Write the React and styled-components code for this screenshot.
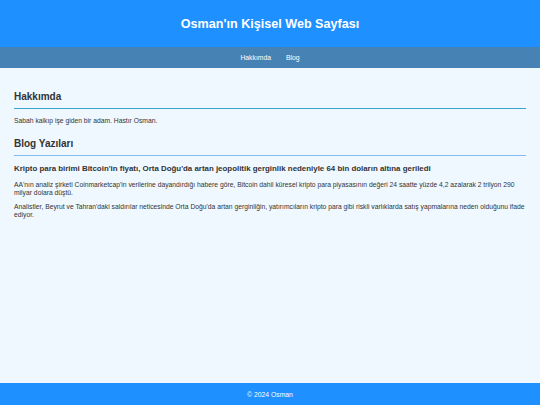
import React from "react"
import styled, { createGlobalStyle } from "styled-components"

const Global = createGlobalStyle`
   html, body {
      margin: 0;
      padding: 0;
      height: 100%;
   }
   body {
      background-color: #f0f8ff;
      font-family: "Liberation Sans", Arial, sans-serif;
      color: #333;
   }
   #root {
      min-height: 100%;
      display: flex;
      flex-direction: column;
   }
`

const Header = styled.header`
   background-color: #1e90ff;
   color: white;
   height: 47px;
   display: flex;
   justify-content: center;
   align-items: center;
`

const Title = styled.h1`
   margin: 0;
   font-size: 12.6px;
   font-weight: bold;
`

const Nav = styled.nav`
   background-color: #4682b4;
   height: 21px;
   display: flex;
   justify-content: center;
   align-items: center;
   gap: 15px;
`

const NavLink = styled.a`
   color: white;
   font-size: 6.8px;
   text-decoration: none;
`

const Main = styled.main`
   flex: 1;
   padding: 23px 14px 22px;
`

const Section = styled.section`
   padding-bottom: 13px;
`

const SectionTitle = styled.h2`
   margin: 0 0 8px;
   padding-bottom: 5px;
   font-size: 10px;
   line-height: 12px;
   font-weight: bold;
   border-bottom: 1px solid ${p => p.$line};
`

const Text = styled.p`
   margin: 0 0 6px;
   font-size: 6.75px;
   line-height: 8px;
   &:last-child {
      margin-bottom: 0;
   }
`

const PostTitle = styled.h3`
   margin: 0 0 7px;
   font-size: 7.9px;
   line-height: 10px;
   font-weight: bold;
`

const Footer = styled.footer`
   background-color: #1e90ff;
   color: white;
   height: 22px;
   display: flex;
   justify-content: center;
   align-items: center;
   font-size: 6.8px;
`

const App = () => {
   return (
      <>
         <Global />
         <Header>
            <Title>Osman'ın Kişisel Web Sayfası</Title>
         </Header>
         <Nav>
            <NavLink href="#hakkimda">Hakkımda</NavLink>
            <NavLink href="#blog">Blog</NavLink>
         </Nav>
         <Main>
            <Section id="hakkimda">
               <SectionTitle $line="#3aa6cf">Hakkımda</SectionTitle>
               <Text>Sabah kalkıp işe giden bir adam. Hastır Osman.</Text>
            </Section>
            <Section id="blog">
               <SectionTitle $line="#7fbcf2">Blog Yazıları</SectionTitle>
               <PostTitle>Kripto para birimi Bitcoin'in fiyatı, Orta Doğu'da artan jeopolitik gerginlik nedeniyle 64 bin doların altına geriledi</PostTitle>
               <Text>AA'nın analiz şirketi Coinmarketcap'in verilerine dayandırdığı habere göre, Bitcoin dahil küresel kripto para piyasasının değeri 24 saatte yüzde 4,2 azalarak 2 trilyon 290 milyar dolara düştü.</Text>
               <Text>Analistler, Beyrut ve Tahran'daki saldırılar neticesinde Orta Doğu'da artan gerginliğin, yatırımcıların kripto para gibi riskli varlıklarda satış yapmalarına neden olduğunu ifade ediyor.</Text>
            </Section>
         </Main>
         <Footer>© 2024 Osman</Footer>
      </>
   )
}

export default App
